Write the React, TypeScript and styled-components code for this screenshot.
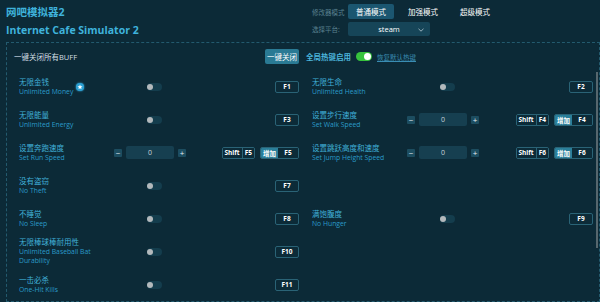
import React from 'react'
import styled, { createGlobalStyle } from 'styled-components'

const GlobalStyle = createGlobalStyle`
    html, body {
        margin: 0;
        padding: 0;
        background: #0c2a37;
        overflow: hidden;
    }
    body {
        font-family: 'Open Sans', 'Noto Sans CJK SC', sans-serif;
        color: #ffffff;
    }
`

type Cheat = {
    cn: string
    en: string[]
    keys?: string[]
    slider?: boolean
    star?: boolean
}

const leftCheats: Cheat[] = [
    { cn: '无限金钱', en: ['Unlimited Money'], keys: ['F1'], star: true },
    { cn: '无限能量', en: ['Unlimited Energy'], keys: ['F3'] },
    { cn: '设置奔跑速度', en: ['Set Run Speed'], keys: ['F5'], slider: true },
    { cn: '没有盗窃', en: ['No Theft'], keys: ['F7'] },
    { cn: '不睡觉', en: ['No Sleep'], keys: ['F8'] },
    {
        cn: '无限棒球棒耐用性',
        en: ['Unlimited Baseball Bat', 'Durability'],
        keys: ['F10']
    },
    { cn: '一击必杀', en: ['One-Hit Kills'], keys: ['F11'] }
]

const rightCheats: Cheat[] = [
    { cn: '无限生命', en: ['Unlimited Health'], keys: ['F2'] },
    { cn: '设置步行速度', en: ['Set Walk Speed'], keys: ['F4'], slider: true },
    {
        cn: '设置跳跃高度和速度',
        en: ['Set Jump Height Speed'],
        keys: ['F6'],
        slider: true
    },
    { cn: '', en: [] },
    { cn: '满饱腹度', en: ['No Hunger'], keys: ['F9'] }
]

const modes = ['普通模式', '加强模式', '超级模式']

const StarBadge = () => (
    <Badge>
        <svg width="6" height="6" viewBox="0 0 24 24">
            <path
                d="M12 2l2.9 6.6 7.1.7-5.4 4.8 1.6 7-6.2-3.7-6.2 3.7 1.6-7L2 9.3l7.1-.7z"
                fill="#ffffff"
            />
        </svg>
    </Badge>
)

const CheatCell: React.FC<{ cheat: Cheat }> = ({ cheat }) => {
    if (!cheat.cn) return <Cell />
    return (
        <Cell>
            <LabelBox>
                <div>
                    <CnLabel>{cheat.cn}</CnLabel>
                    {cheat.en.map((line) => (
                        <EnLabel key={line}>{line}</EnLabel>
                    ))}
                </div>
                {cheat.star && <StarBadge />}
            </LabelBox>
            {cheat.slider ? (
                <Slider>
                    <StepButton>−</StepButton>
                    <ValueBox>0</ValueBox>
                    <StepButton>+</StepButton>
                </Slider>
            ) : (
                <Toggle />
            )}
            <Keys>
                {cheat.slider ? (
                    <>
                        <KeyCombo>
                            <KeyPart>Shift</KeyPart>
                            <KeyPart $divider>{cheat.keys?.[0]}</KeyPart>
                        </KeyCombo>
                        <KeyCombo>
                            <KeyPart $filled>增加</KeyPart>
                            <KeyPart $wide>{cheat.keys?.[0]}</KeyPart>
                        </KeyCombo>
                    </>
                ) : (
                    <KeyBox>{cheat.keys?.[0]}</KeyBox>
                )}
            </Keys>
        </Cell>
    )
}

const App = () => {
    return (
        <Page>
            <GlobalStyle />
            <Header>
                <Titles>
                    <Title>网吧模拟器2</Title>
                    <Title>Internet Cafe Simulator 2</Title>
                </Titles>
                <Settings>
                    <SettingRow>
                        <SettingLabel>修改器模式</SettingLabel>
                        <Modes>
                            {modes.map((m, i) => (
                                <ModeButton key={m} $active={i === 0}>
                                    {m}
                                </ModeButton>
                            ))}
                        </Modes>
                    </SettingRow>
                    <SettingRow>
                        <SettingLabel>选择平台:</SettingLabel>
                        <Select>
                            <span>steam</span>
                            <Chevron>
                                <svg width="6" height="4" viewBox="0 0 6 4">
                                    <path
                                        d="M0.5 0.8L3 3.2 5.5 0.8"
                                        stroke="#b9ccd4"
                                        strokeWidth="0.8"
                                        fill="none"
                                    />
                                </svg>
                            </Chevron>
                        </Select>
                    </SettingRow>
                </Settings>
            </Header>
            <Panel>
                <Scrollbar />
                <TopBar>
                    <BulkSide>
                        <BulkLabel>一键关闭所有BUFF</BulkLabel>
                        <CloseAllButton>一键关闭</CloseAllButton>
                    </BulkSide>
                    <HotkeySide>
                        <HotkeyLabel>全局热键启用</HotkeyLabel>
                        <GreenSwitch />
                        <ResetLink>恢复默认热键</ResetLink>
                    </HotkeySide>
                </TopBar>
                <Grid>
                    <Column>
                        {leftCheats.map((c) => (
                            <CheatCell key={c.cn} cheat={c} />
                        ))}
                    </Column>
                    <Column>
                        {rightCheats.map((c, i) => (
                            <CheatCell key={c.cn || i} cheat={c} />
                        ))}
                    </Column>
                </Grid>
            </Panel>
        </Page>
    )
}

export default App

const Page = styled.div`
    width: 600px;
    height: 302px;
    overflow: hidden;
    background: #0c2a37;
`

const Header = styled.div`
    display: grid;
    grid-template-columns: 306px 1fr;
    height: 42px;
    padding-left: 6px;
`

const Titles = styled.div`
    display: flex;
    flex-direction: column;
    padding-top: 5px;
    gap: 4px;
`

const Title = styled.div`
    font-size: 10.5px;
    font-weight: 700;
    line-height: 14px;
    color: #3fb3dc;
`

const Settings = styled.div`
    display: flex;
    flex-direction: column;
    gap: 3px;
    padding-top: 4px;
`

const SettingRow = styled.div`
    display: flex;
    align-items: center;
    gap: 5px;
`

const SettingLabel = styled.span`
    font-size: 6.5px;
    color: #5a8190;
    width: 31px;
    white-space: nowrap;
`

const Modes = styled.div`
    display: flex;
    gap: 6px;
`

const ModeButton = styled.div<{ $active?: boolean }>`
    width: 46px;
    height: 15px;
    border-radius: 2px;
    display: flex;
    align-items: center;
    justify-content: center;
    font-size: 7.5px;
    color: #ffffff;
    background: ${(p) => (p.$active ? '#1b5670' : 'transparent')};
`

const Select = styled.div`
    position: relative;
    width: 82px;
    height: 14px;
    border-radius: 2px;
    background: #164558;
    display: flex;
    align-items: center;
    justify-content: center;
    font-size: 7.5px;
    color: #ffffff;
`

const Chevron = styled.span`
    position: absolute;
    right: 6px;
    top: 6px;
    display: flex;
`

const Panel = styled.div`
    position: relative;
    margin-left: 6px;
    height: 258px;
    border: 1px dashed #235a6e;
    overflow: hidden;
`

const Scrollbar = styled.div`
    position: absolute;
    right: 1px;
    top: 29px;
    width: 2px;
    height: 176px;
    background: #56676e;
`

const TopBar = styled.div`
    display: grid;
    grid-template-columns: 292px 1fr;
    padding-top: 6px;
    height: 15px;
`

const BulkSide = styled.div`
    display: flex;
    align-items: center;
    justify-content: space-between;
    padding-left: 7px;
`

const BulkLabel = styled.span`
    font-size: 7.5px;
    color: #d3dfe4;
`

const CloseAllButton = styled.div`
    width: 34px;
    height: 15px;
    border-radius: 2px;
    background: #2a7a94;
    display: flex;
    align-items: center;
    justify-content: center;
    font-size: 7.5px;
    color: #ffffff;
`

const HotkeySide = styled.div`
    display: flex;
    align-items: center;
    padding-left: 7px;
`

const HotkeyLabel = styled.span`
    font-size: 7.5px;
    font-weight: 700;
    color: #4db6dc;
`

const GreenSwitch = styled.div`
    position: relative;
    width: 16px;
    height: 9px;
    border-radius: 5px;
    background: #37c33d;
    margin-left: 5px;
    &::after {
        content: '';
        position: absolute;
        right: 1px;
        top: 1px;
        width: 7px;
        height: 7px;
        border-radius: 50%;
        background: #ffffff;
    }
`

const ResetLink = styled.span`
    margin-left: 5px;
    font-size: 6.5px;
    color: #3a8db3;
    text-decoration: underline;
`

const Grid = styled.div`
    display: grid;
    grid-template-columns: 280px 281px;
    column-gap: 13px;
    padding-left: 12px;
    padding-top: 6px;
`

const Column = styled.div`
    display: flex;
    flex-direction: column;
`

const Cell = styled.div`
    display: flex;
    align-items: center;
    height: 33px;
`

const LabelBox = styled.div`
    width: 95px;
    flex-shrink: 0;
    display: flex;
    align-items: center;
`

const CnLabel = styled.div`
    font-size: 7.5px;
    line-height: 9px;
    color: #40b0d8;
    white-space: nowrap;
`

const EnLabel = styled.div`
    font-size: 6.8px;
    line-height: 9px;
    color: #2b9bc9;
    white-space: nowrap;
`

const Badge = styled.div`
    width: 8px;
    height: 8px;
    border-radius: 50%;
    background: #2a9fd2;
    box-shadow: 0 0 2px #3cb6ea;
    margin-left: 3px;
    display: flex;
    align-items: center;
    justify-content: center;
`

const Toggle = styled.div`
    position: relative;
    width: 15px;
    height: 8px;
    border-radius: 4px;
    background: #143d4d;
    margin-left: 33px;
    &::after {
        content: '';
        position: absolute;
        left: 0;
        top: 1px;
        width: 6px;
        height: 6px;
        border-radius: 50%;
        background: #b3b9bc;
    }
`

const Slider = styled.div`
    display: flex;
    align-items: center;
    gap: 4px;
`

const StepButton = styled.div`
    width: 8px;
    height: 8px;
    border-radius: 1px;
    background: #1c4d60;
    display: flex;
    align-items: center;
    justify-content: center;
    font-size: 8px;
    line-height: 8px;
    color: #e6eef1;
`

const ValueBox = styled.div`
    width: 48px;
    height: 13px;
    border-radius: 2px;
    background: #163f50;
    display: flex;
    align-items: center;
    justify-content: center;
    font-size: 7px;
    color: #c9d6db;
`

const Keys = styled.div`
    margin-left: auto;
    display: flex;
    gap: 5px;
`

const KeyBox = styled.div`
    width: 22px;
    height: 10px;
    border: 1px solid #2a6376;
    border-radius: 2px;
    background: #0c2b38;
    display: flex;
    align-items: center;
    justify-content: center;
    font-size: 6.5px;
    font-weight: 700;
    color: #ffffff;
`

const KeyCombo = styled.div`
    display: flex;
    height: 10px;
    border: 1px solid #2a6376;
    border-radius: 2px;
    overflow: hidden;
`

const KeyPart = styled.div<{ $filled?: boolean; $divider?: boolean; $wide?: boolean }>`
    display: flex;
    align-items: center;
    justify-content: center;
    padding: 0 2px;
    min-width: ${(p) => (p.$wide ? '16px' : 'auto')};
    font-size: 6.5px;
    font-weight: 700;
    color: #ffffff;
    background: ${(p) => (p.$filled ? '#2a7f9a' : '#0c2b38')};
    border-left: ${(p) => (p.$divider ? '1px solid #2a6376' : 'none')};
`
